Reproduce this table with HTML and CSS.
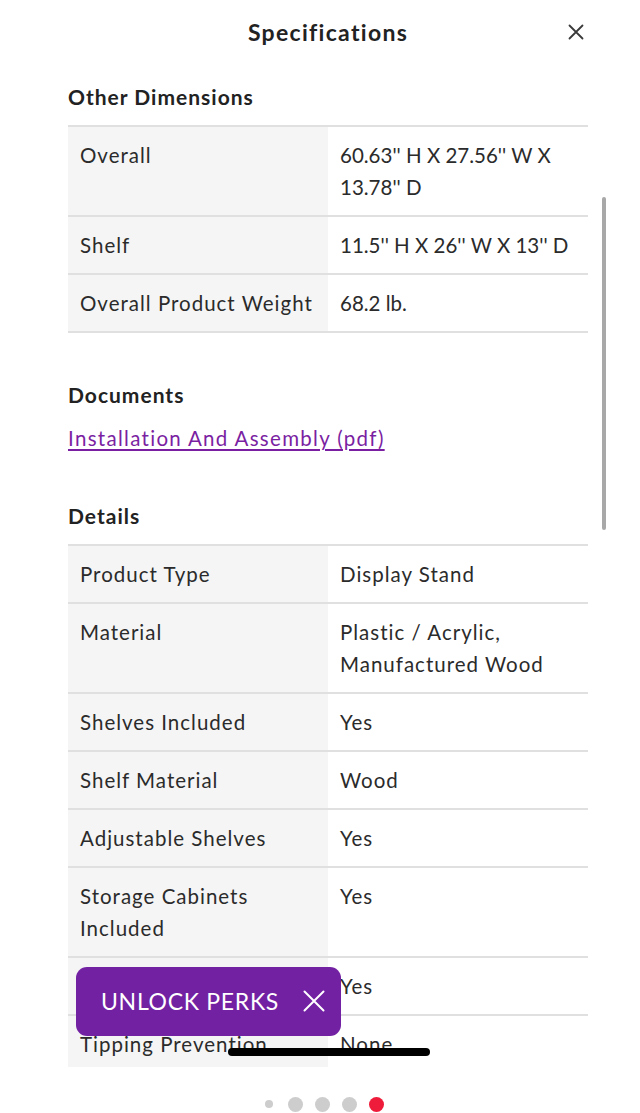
FILE: index.html
```html
<!DOCTYPE html>
<html lang="en">
<head>
<meta charset="utf-8">
<title>Specifications</title>
<link rel="stylesheet" href="styles.css">
</head>
<body>
<div class="screen">
  <div class="sheet">
    <header class="sheet-header">
      <span></span>
      <h1 class="sheet-title">Specifications</h1>
      <button class="close-btn" aria-label="Close">
        <svg width="16" height="16" viewBox="0 0 16 16"><path d="M1.5 1.5 L14.5 14.5 M14.5 1.5 L1.5 14.5" stroke="#3a3a3a" stroke-width="1.8" stroke-linecap="round" fill="none"/></svg>
      </button>
    </header>
    <main class="content">
      <section class="section">
        <h2 class="section-title">Other Dimensions</h2>
        <div class="spec-table">
          <div class="spec-row"><div class="spec-label">Overall</div><div class="spec-value dims">60.63'' H X 27.56'' W X 13.78'' D</div></div>
          <div class="spec-row"><div class="spec-label">Shelf</div><div class="spec-value dims">11.5'' H X 26'' W X 13'' D</div></div>
          <div class="spec-row"><div class="spec-label">Overall Product Weight</div><div class="spec-value dims">68.2 lb.</div></div>
        </div>
      </section>
      <section class="section docs">
        <h2 class="section-title">Documents</h2>
        <a class="doc-link" href="#">Installation And Assembly (pdf)</a>
      </section>
      <section class="section details">
        <h2 class="section-title">Details</h2>
        <div class="spec-table">
          <div class="spec-row"><div class="spec-label">Product Type</div><div class="spec-value">Display Stand</div></div>
          <div class="spec-row"><div class="spec-label">Material</div><div class="spec-value">Plastic / Acrylic, Manufactured Wood</div></div>
          <div class="spec-row"><div class="spec-label">Shelves Included</div><div class="spec-value">Yes</div></div>
          <div class="spec-row"><div class="spec-label">Shelf Material</div><div class="spec-value">Wood</div></div>
          <div class="spec-row"><div class="spec-label">Adjustable Shelves</div><div class="spec-value">Yes</div></div>
          <div class="spec-row"><div class="spec-label">Storage Cabinets Included</div><div class="spec-value">Yes</div></div>
          <div class="spec-row"><div class="spec-label">Doors Included</div><div class="spec-value">Yes</div></div>
          <div class="spec-row"><div class="spec-label">Tipping Prevention</div><div class="spec-value">None</div></div>
        </div>
      </section>
    </main>
    <div class="scrollbar"></div>
  </div>
  <button class="perks">
    <span class="perks-text">UNLOCK PERKS</span>
    <svg width="22" height="22" viewBox="0 0 22 22"><path d="M1.5 1.5 L20.5 20.5 M20.5 1.5 L1.5 20.5" stroke="#fff" stroke-width="2" stroke-linecap="round" fill="none"/></svg>
  </button>
  <div class="home-indicator"></div>
  <div class="dots">
    <span class="dot dot-small"></span>
    <span class="dot"></span>
    <span class="dot"></span>
    <span class="dot"></span>
    <span class="dot dot-active"></span>
  </div>
</div>
</body>
</html>
```
FILE: styles.css
```css
* { box-sizing: border-box; }
html, body {
  margin: 0;
  padding: 0;
  background: #fff;
}
body {
  font-family: Lato, "Open Sans", "Liberation Sans", sans-serif;
  color: #2b2b2b;
}
.screen {
  position: relative;
  width: 640px;
  height: 1113px;
  overflow: hidden;
}
.sheet {
  position: relative;
  height: 1067px;
  overflow: hidden;
}
.sheet-header {
  height: 64px;
  display: grid;
  grid-template-columns: 1fr auto 1fr;
  align-items: center;
  padding: 0 56px 0 72px;
}
.sheet-title {
  margin: 0;
  font-size: 23px;
  font-weight: 700;
  color: #222;
  letter-spacing: 1.3px;
}
.close-btn {
  justify-self: end;
  border: 0;
  background: none;
  padding: 0;
  width: 16px;
  height: 16px;
  display: flex;
}
.content {
  padding: 19px 52px 0 68px;
}
.section-title {
  margin: 0;
  font-size: 21px;
  line-height: 28px;
  font-weight: 700;
  color: #222;
  letter-spacing: 1px;
}
.section .spec-table { margin-top: 14px; }
.spec-table {
  border-top: 2px solid #e0e0e0;
}
.spec-row {
  display: grid;
  grid-template-columns: 260px 1fr;
  border-bottom: 2px solid #e0e0e0;
}
.spec-label, .spec-value {
  padding: 12px;
  font-size: 20.5px;
  line-height: 32px;
  letter-spacing: 1px;
}
.spec-value.dims { letter-spacing: 0; }
.spec-label { background: #f5f5f5; }
.docs { margin-top: 48px; }
.doc-link {
  display: block;
  margin-top: 15px;
  font-size: 20.5px;
  line-height: 28px;
  color: #7b1fa2;
  letter-spacing: 1.3px;
  text-decoration: underline;
  text-underline-offset: 3px;
  text-decoration-thickness: 1.5px;
}
.details { margin-top: 50px; }
.scrollbar {
  position: absolute;
  left: 602px;
  top: 197px;
  width: 4px;
  height: 333px;
  border-radius: 2px;
  background: #a8a8a8;
}
.perks {
  position: absolute;
  left: 76px;
  top: 967px;
  width: 265px;
  height: 69px;
  border: 0;
  border-radius: 11px;
  background: #7221a3;
  display: flex;
  align-items: center;
  gap: 24px;
  padding: 0 0 2px 25px;
  font-family: inherit;
}
.perks-text {
  color: #fff;
  font-size: 23px;
  letter-spacing: 0.7px;
}
.home-indicator {
  position: absolute;
  left: 228px;
  top: 1048px;
  width: 202px;
  height: 8px;
  border-radius: 4px;
  background: #000;
}
.dots {
  display: flex;
  align-items: center;
  justify-content: center;
  gap: 12px;
  height: 46px;
  padding: 28px 0 0 8px;
}
.dot {
  width: 15px;
  height: 15px;
  border-radius: 50%;
  background: #cdcdcd;
}
.dot-small {
  width: 8px;
  height: 8px;
  margin-right: 3px;
}
.dot-active { background: #ee1c3a; }
```
